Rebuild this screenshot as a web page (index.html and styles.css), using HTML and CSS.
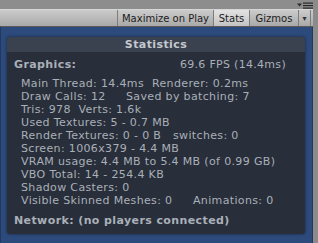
FILE: index.html
```html
<!DOCTYPE html>
<html lang="en">
<head>
  <meta charset="UTF-8">
  <title>Game View Stats</title>
  <link rel="stylesheet" href="styles.css">
</head>
<body>
  <div class="window">
    <div class="tab-strip">
      <svg class="menu-icon" width="16" height="7" viewBox="0 0 16 7">
        <path d="M0 1.5h5l-2.5 3z" fill="#2a2a2a"/>
        <rect x="6" y="0.5" width="10" height="1.2" fill="#2a2a2a"/>
        <rect x="6" y="3" width="10" height="1.2" fill="#2a2a2a"/>
        <rect x="6" y="5.5" width="10" height="1.2" fill="#2a2a2a"/>
      </svg>
    </div>

    <div class="toolbar">
      <div class="toolbar-fill"></div>
      <div class="tool-btn btn-max">Maximize on Play</div>
      <div class="tool-btn btn-stats active">Stats</div>
      <div class="tool-btn btn-gizmos">Gizmos</div>
      <div class="tool-btn drop">&#9662;</div>
    </div>

    <div class="game-view">
      <div class="stats-panel">
        <div class="panel-title">Statistics</div>
        <div class="panel-body">
          <div class="section-head">
            <span>Graphics:</span>
            <span class="fps">69.6 FPS (14.4ms)</span>
          </div>
          <div class="stat-lines">
            <div class="line"><span class="col col-main">Main Thread: 14.4ms</span><span>Renderer: 0.2ms</span></div>
            <div class="line"><span class="col col-draw">Draw Calls: 12</span><span>Saved by batching: 7</span></div>
            <div class="line">Tris: 978 &nbsp;Verts: 1.6k</div>
            <div class="line">Used Textures: 5 - 0.7 MB</div>
            <div class="line"><span class="col col-rt">Render Textures: 0 - 0 B</span><span>switches: 0</span></div>
            <div class="line">Screen: 1006x379 - 4.4 MB</div>
            <div class="line">VRAM usage: 4.4 MB to 5.4 MB (of 0.99 GB)</div>
            <div class="line">VBO Total: 14 - 254.4 KB</div>
            <div class="line">Shadow Casters: 0</div>
            <div class="line"><span class="col col-skin">Visible Skinned Meshes: 0</span><span>Animations: 0</span></div>
          </div>
          <div class="section-head network">Network: (no players connected)</div>
        </div>
      </div>
    </div>
  </div>
</body>
</html>
```

FILE: styles.css
```css
body {
  margin: 0;
  background: #8b8b8b;
  font-family: "DejaVu Sans", Verdana, sans-serif;
}
.window {
  width: 313px;
  height: 243px;
}
.tab-strip {
  height: 9px;
  background: #8d8d8d;
  display: flex;
  justify-content: flex-end;
  align-items: center;
}
.menu-icon {
  display: block;
  margin-top: 1px;
}
.toolbar {
  height: 16px;
  display: flex;
  background: linear-gradient(#cbcbcb, #a9a9a9);
  border-top: 1px solid #d6d6d6;
  border-bottom: 1px solid #5a5a5a;
  font-size: 10px;
  color: #1c1c1c;
}
.toolbar-fill {
  flex: 1;
}
.tool-btn {
  display: flex;
  align-items: center;
  justify-content: center;
  border-left: 1px solid #7c7c7c;
}
.btn-max {
  width: 95px;
}
.btn-stats {
  width: 35px;
}
.btn-gizmos {
  width: 48px;
}
.tool-btn.active {
  background: linear-gradient(#e2e2e2, #c4c4c4);
}
.tool-btn.drop {
  width: 11px;
  font-size: 8px;
  color: #333;
  border-right: 1px solid #7c7c7c;
  margin-right: 2px;
}
.game-view {
  height: 204px;
  background: #2c4a7c;
  border-left: 1px solid #23385c;
  border-right: 1px solid #23385c;
  border-bottom: 1px solid #1f3050;
  padding: 10px 7px 7px 6px;
}
.stats-panel {
  height: 197px;
  background: #282e3a;
  border-radius: 3px;
  box-shadow: 0 0 3px rgba(0,0,0,0.5);
  overflow: hidden;
  color: #aab0b8;
}
.panel-title {
  height: 15px;
  line-height: 15px;
  background: #3b424f;
  text-align: center;
  font-weight: bold;
  font-size: 11px;
  color: #c4c8ce;
  letter-spacing: 0.4px;
}
.panel-body {
  padding: 6px 19px 0 7px;
}
.section-head {
  display: flex;
  justify-content: space-between;
  font-weight: bold;
  font-size: 11px;
  line-height: 14px;
  letter-spacing: 0.4px;
}
.fps {
  font-weight: normal;
  letter-spacing: 0.3px;
}
.stat-lines {
  padding: 5px 0 7px 7px;
}
.line {
  font-size: 11px;
  line-height: 13px;
  letter-spacing: 0.35px;
  white-space: nowrap;
}
.col {
  display: inline-block;
}
.col-main {
  width: 131px;
}
.col-draw {
  width: 105px;
}
.col-rt {
  width: 152px;
}
.col-skin {
  width: 172px;
}
```
